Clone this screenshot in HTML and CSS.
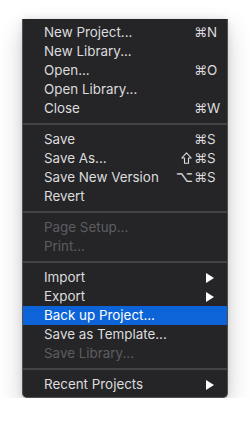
FILE: index.html
```html
<!DOCTYPE html>
<html>
<head>
<meta charset="utf-8">
<link rel="stylesheet" href="styles.css">
</head>
<body>
<div class="menu">
  <div class="item"><span class="label">New Project...</span><span class="keys"><span class="mods">⌘</span><span class="key">N</span></span></div>
  <div class="item"><span class="label">New Library...</span></div>
  <div class="item"><span class="label">Open...</span><span class="keys"><span class="mods">⌘</span><span class="key">O</span></span></div>
  <div class="item"><span class="label">Open Library...</span></div>
  <div class="item"><span class="label">Close</span><span class="keys"><span class="mods">⌘</span><span class="key">W</span></span></div>
  <div class="sep"></div>
  <div class="item"><span class="label">Save</span><span class="keys"><span class="mods">⌘</span><span class="key">S</span></span></div>
  <div class="item"><span class="label">Save As...</span><span class="keys"><svg class="shift" width="11" height="12" viewBox="0 0 11 12"><path d="M5.5 0.8 L10.2 6 L7.5 6 L7.5 11.2 L3.5 11.2 L3.5 6 L0.8 6 Z" fill="none" stroke="currentColor" stroke-width="1.1" stroke-linejoin="round"/></svg><span class="mods">⌘</span><span class="key">S</span></span></div>
  <div class="item"><span class="label">Save New Version</span><span class="keys"><span class="mods opt">⌥</span><span class="mods">⌘</span><span class="key">S</span></span></div>
  <div class="item"><span class="label">Revert</span></div>
  <div class="sep"></div>
  <div class="item disabled"><span class="label">Page Setup...</span></div>
  <div class="item disabled"><span class="label">Print...</span></div>
  <div class="sep"></div>
  <div class="item"><span class="label">Import</span><svg class="arrow" width="8" height="10" viewBox="0 0 8 10"><path d="M0 0 L8 5 L0 10 Z" fill="currentColor"/></svg></div>
  <div class="item"><span class="label">Export</span><svg class="arrow" width="8" height="10" viewBox="0 0 8 10"><path d="M0 0 L8 5 L0 10 Z" fill="currentColor"/></svg></div>
  <div class="item selected"><span class="label">Back up Project...</span></div>
  <div class="item"><span class="label">Save as Template...</span></div>
  <div class="item disabled"><span class="label">Save Library...</span></div>
  <div class="sep"></div>
  <div class="item"><span class="label">Recent Projects</span><svg class="arrow" width="8" height="10" viewBox="0 0 8 10"><path d="M0 0 L8 5 L0 10 Z" fill="currentColor"/></svg></div>
</div>
</body>
</html>
```

FILE: styles.css
```css
html, body {
  margin: 0;
  padding: 0;
  background: #ffffff;
}

body {
  font-family: Inter, "Noto Sans", "DejaVu Sans", sans-serif;
}

.menu {
  margin-left: 22px;
  margin-top: 19px;
  width: 206px;
  box-sizing: border-box;
  background: #252528;
  border: 1px solid #505053;
  border-top: none;
  border-radius: 0 0 5px 5px;
  padding: 4px 0 3px 0;
  box-shadow: 0 10px 24px rgba(0, 0, 0, 0.2), 0 0 6px rgba(0, 0, 0, 0.1);
}

.item {
  height: 19px;
  display: flex;
  align-items: center;
  padding-left: 21px;
  padding-right: 7px;
  color: #dcdcdd;
  font-size: 13.4px;
  line-height: 19px;
}

.item.disabled {
  color: #5d5d61;
}

.item.selected {
  background: #0c64d8;
  color: #ffffff;
}

.label {
  flex: 1;
  white-space: nowrap;
}

.keys {
  display: flex;
  align-items: center;
  font-family: "DejaVu Sans", sans-serif;
  font-size: 13px;
}

.mods {
  text-align: right;
}

.mods.opt {
  font-size: 15px;
  margin-right: 1px;
}

.shift {
  margin-right: 2px;
  margin-top: -1px;
}

.key {
  width: 13px;
  text-align: left;
  font-family: Inter, sans-serif;
  font-size: 13.4px;
}

.arrow {
  margin-right: 6px;
  color: #ffffff;
}

.sep {
  height: 2px;
  margin: 5px 0;
  background: #444447;
}
```
